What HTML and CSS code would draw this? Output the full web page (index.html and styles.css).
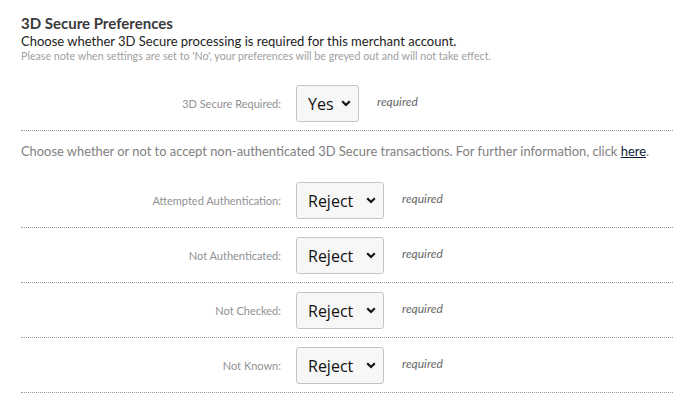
FILE: index.html
```html
<!DOCTYPE html>
<html>
<head>
<meta charset="utf-8">
<link rel="stylesheet" href="styles.css">
</head>
<body>
<div class="page">
  <h2 class="title">3D Secure Preferences</h2>
  <p class="lead">Choose whether 3D Secure processing is required for this merchant account.</p>
  <p class="note">Please note when settings are set to 'No', your preferences will be greyed out and will not take effect.</p>

  <div class="row row-first">
    <label class="label">3D Secure Required:</label>
    <div class="select-wrap sel-yes">
      <select class="select"><option>Yes</option><option>No</option></select>
      <svg class="chev" width="10" height="7" viewBox="0 0 10 7"><path d="M1.2 1.3 L5 5 L8.8 1.3" fill="none" stroke="#111" stroke-width="2.2"/></svg>
    </div>
    <span class="req">required</span>
  </div>

  <p class="info">Choose whether or not to accept non-authenticated 3D Secure transactions. For further information, click <a href="#" class="link">here</a>.</p>

  <div class="row row-info">
    <label class="label">Attempted Authentication:</label>
    <div class="select-wrap sel-rej">
      <select class="select"><option>Reject</option><option>Accept</option></select>
      <svg class="chev" width="10" height="7" viewBox="0 0 10 7"><path d="M1.2 1.3 L5 5 L8.8 1.3" fill="none" stroke="#111" stroke-width="2.2"/></svg>
    </div>
    <span class="req">required</span>
  </div>
  <div class="row">
    <label class="label">Not Authenticated:</label>
    <div class="select-wrap sel-rej">
      <select class="select"><option>Reject</option><option>Accept</option></select>
      <svg class="chev" width="10" height="7" viewBox="0 0 10 7"><path d="M1.2 1.3 L5 5 L8.8 1.3" fill="none" stroke="#111" stroke-width="2.2"/></svg>
    </div>
    <span class="req">required</span>
  </div>
  <div class="row">
    <label class="label">Not Checked:</label>
    <div class="select-wrap sel-rej">
      <select class="select"><option>Reject</option><option>Accept</option></select>
      <svg class="chev" width="10" height="7" viewBox="0 0 10 7"><path d="M1.2 1.3 L5 5 L8.8 1.3" fill="none" stroke="#111" stroke-width="2.2"/></svg>
    </div>
    <span class="req">required</span>
  </div>
  <div class="row">
    <label class="label">Not Known:</label>
    <div class="select-wrap sel-rej">
      <select class="select"><option>Reject</option><option>Accept</option></select>
      <svg class="chev" width="10" height="7" viewBox="0 0 10 7"><path d="M1.2 1.3 L5 5 L8.8 1.3" fill="none" stroke="#111" stroke-width="2.2"/></svg>
    </div>
    <span class="req">required</span>
  </div>
</div>
</body>
</html>
```
FILE: styles.css
```css
html, body {
  margin: 0;
  padding: 0;
  background: #fff;
}
body {
  font-family: Lato, "Open Sans", sans-serif;
  color: #333;
}
.page {
  width: 652px;
  padding: 13px 0 0 21px;
}
.title {
  margin: 0;
  font-size: 15px;
  font-weight: 700;
  line-height: 20px;
  color: #3a3a3a;
}
.lead {
  margin: 0;
  font-size: 13px;
  line-height: 16px;
  color: #222;
}
.note {
  margin: 0;
  font-size: 10.7px;
  line-height: 13px;
  color: #a0a0a0;
}
.row {
  display: grid;
  grid-template-columns: 260px auto auto;
  justify-content: start;
  align-items: center;
  column-gap: 15px;
  padding: 9px 0 8px 0;
  border-bottom: 1px dotted #999;
}
.row-first {
  margin-top: 14px;
}
.label {
  justify-self: end;
  font-size: 11px;
  color: #919191;
}
.select-wrap {
  position: relative;
  height: 37px;
}
.sel-yes { width: 63px; }
.sel-rej { width: 88px; }
.select {
  appearance: none;
  -webkit-appearance: none;
  box-sizing: border-box;
  width: 100%;
  height: 37px;
  margin: 0;
  padding: 0 0 0 11px;
  border: 1px solid #c4c4c4;
  border-radius: 3px;
  background: #f7f7f7;
  font-family: "Segoe UI", "Open Sans", Lato, sans-serif;
  font-size: 16px;
  color: #111;
}
.chev {
  position: absolute;
  right: 8px;
  top: 15px;
  pointer-events: none;
}
.req {
  margin-left: 3px;
  font-size: 12px;
  font-style: italic;
  color: #666;
  position: relative;
  top: -2px;
}
.info {
  margin: 0;
  padding: 12px 0 13px 0;
  font-size: 12.9px;
  line-height: 17px;
  color: #808080;
}
.link {
  color: #0d1a3d;
  text-decoration: underline;
}
```
